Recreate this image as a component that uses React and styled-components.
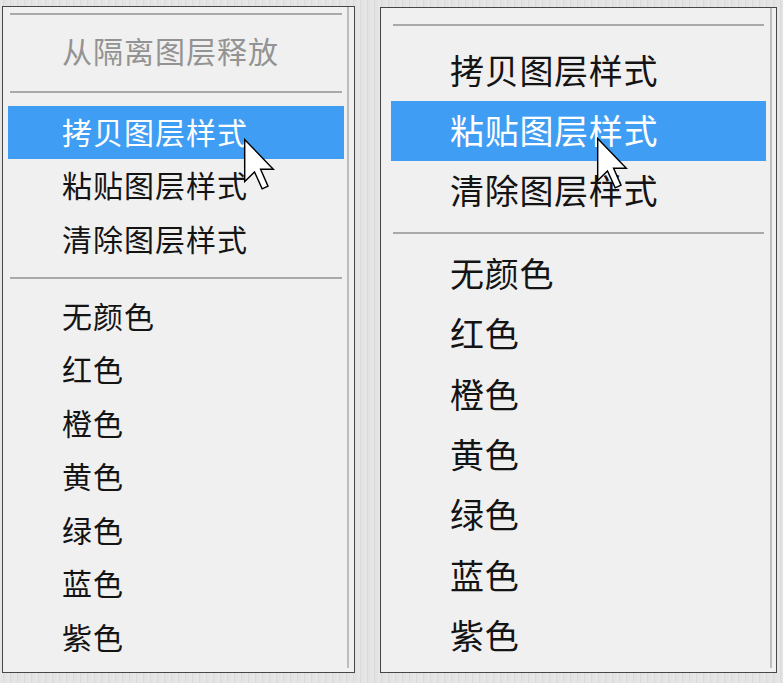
import React from "react";
import styled, { createGlobalStyle } from "styled-components";

const GlobalStyle = createGlobalStyle`
  html, body { margin: 0; padding: 0; }
  body {
    width: 783px;
    height: 683px;
    overflow: hidden;
    background-color: #e1e1e1;
    background-image: repeating-linear-gradient(90deg, #e6e6e6 0 3px, #dadada 3px 4px, #e3e3e3 4px 7px);
    font-family: "Noto Sans CJK SC", "Noto Sans", sans-serif;
  }
`;

const Page = styled.div`
  display: flex;
  align-items: flex-start;
  gap: 25px;
  padding: 0 0 0 2px;
`;

const Menu = styled.div`
  position: relative;
  box-sizing: border-box;
  margin-top: ${(p) => p.$top}px;
  width: ${(p) => p.$width}px;
  height: ${(p) => p.$height}px;
  border: 1px solid #474747;
  background: #f0f0f0;
  display: flex;
`;

const Inner = styled.div`
  flex: 1;
  display: flex;
  flex-direction: column;
  padding-left: ${(p) => p.$pl}px;
  padding-right: ${(p) => p.$pr}px;
  margin-right: ${(p) => p.$mr}px;
  margin-bottom: 4px;
  border-right: 2px solid #bdbdbd;
`;

const Separator = styled.div`
  flex-shrink: 0;
  height: 2px;
  background: #a9a9a9;
  margin: ${(p) => p.$mt}px 2px ${(p) => p.$mb}px 2px;
`;

const Item = styled.div`
  flex-shrink: 0;
  height: ${(p) => p.$h}px;
  display: flex;
  align-items: center;
  box-sizing: border-box;
  padding-left: ${(p) => p.$indent}px;
  padding-bottom: 3px;
  font-size: ${(p) => p.$fs}px;
  letter-spacing: ${(p) => p.$ls}px;
  white-space: nowrap;
  color: ${(p) => (p.$active ? "#ffffff" : p.$disabled ? "#939393" : "#141414")};
  background: ${(p) => (p.$active ? "#3f9df3" : "transparent")};
`;

const CursorWrap = styled.div`
  position: absolute;
  left: ${(p) => p.$x}px;
  top: ${(p) => p.$y}px;
  width: 32px;
  height: 53px;
  pointer-events: none;
`;

const Cursor = ({ x, y }) => (
  <CursorWrap $x={x} $y={y}>
    <svg width="32" height="53" viewBox="0 0 12 20">
      <path
        d="M0.6 0.6 L0.6 16.4 L4.3 12.8 L7.2 19.2 L9.4 18.2 L6.6 11.8 L11.4 11.8 Z"
        fill="#ffffff"
        stroke="#000000"
        strokeWidth="0.55"
        strokeLinejoin="miter"
      />
    </svg>
  </CursorWrap>
);

const colors = ["无颜色", "红色", "橙色", "黄色", "绿色", "蓝色", "紫色"];
const styles = ["拷贝图层样式", "粘贴图层样式", "清除图层样式"];

export default function App() {
  return (
    <>
      <GlobalStyle />
      <Page>
        <Menu $top={6} $width={353} $height={667}>
          <Inner $pl={5} $pr={3} $mr={5}>
            <Separator $mt={6} $mb={10} />
            <Item $h={53.5} $indent={54} $fs={30} $ls={1} $disabled>
              从隔离图层释放
            </Item>
            <Separator $mt={12.5} $mb={12.5} />
            {styles.map((s, i) => (
              <Item key={s} $h={53.5} $indent={54} $fs={30} $ls={1} $active={i === 0}>
                {s}
              </Item>
            ))}
            <Separator $mt={10.5} $mb={11} />
            {colors.map((c) => (
              <Item key={c} $h={53.5} $indent={54} $fs={30} $ls={1}>
                {c}
              </Item>
            ))}
          </Inner>
          <Cursor x={240} y={131} />
        </Menu>
        <Menu $top={7} $width={397} $height={666}>
          <Inner $pl={10} $pr={4} $mr={4}>
            <Separator $mt={16} $mb={15} />
            {styles.map((s, i) => (
              <Item key={s} $h={60} $indent={59} $fs={34} $ls={0.7} $active={i === 1}>
                {s}
              </Item>
            ))}
            <Separator $mt={11} $mb={10} />
            {colors.map((c) => (
              <Item key={c} $h={60.3} $indent={59} $fs={34} $ls={0.7}>
                {c}
              </Item>
            ))}
          </Inner>
          <Cursor x={215} y={129} />
        </Menu>
      </Page>
    </>
  );
}
